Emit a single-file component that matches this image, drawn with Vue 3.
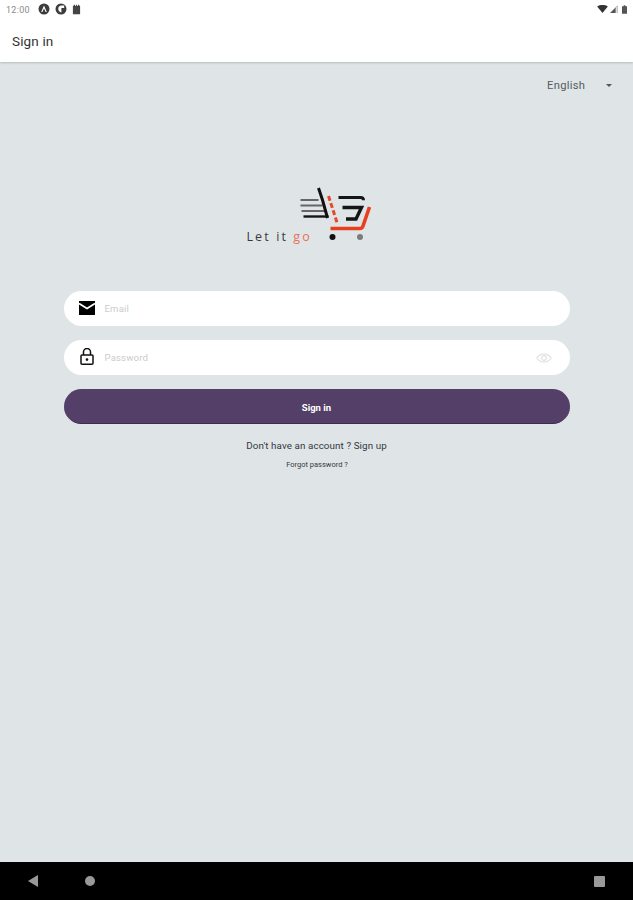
<script setup>
const title = 'Sign in'
</script>

<template>
  <div class="screen">
    <header class="top">
      <div class="status">
        <div class="status-left">
          <span class="time">12:00</span>
          <svg class="ic" viewBox="0 0 12 12"><circle cx="6" cy="6" r="5.5" fill="#3c3c3c"/><path d="M6 2.600 8.800 9H7.600L6 5.400 4.400 9H3.200Z" fill="#fff"/></svg>
          <svg class="ic" viewBox="0 0 12 12"><circle cx="6" cy="6" r="5.500" fill="#3c3c3c"/><path d="M6 2.500h3.200v2.600H6.400v4.300A3.500 3.500 0 0 1 6 2.500Z" fill="#fff"/></svg>
          <svg class="ic card" viewBox="0 0 10 12"><path d="M2.500.8h1v1.400h1V.8h1v1.400h1V.8h1l1.500 1.500v9H1v-9Z" fill="#444"/></svg>
        </div>
        <div class="status-right">
          <svg class="wifi" viewBox="0 0 12 9"><path d="M0 1.600C3.500-.5 8.500-.5 12 1.600L6 9Z" fill="#333"/></svg>
          <svg class="signal" viewBox="0 0 9 9"><path d="M8.500.5V9H0Z" fill="#555"/><path d="M6.300 3 6.300 9H8.500V.5Z" fill="#ddd"/></svg>
          <svg class="batt" viewBox="0 0 6 10"><path d="M2 0h2v1h2v9H0V1h2Z" fill="#555"/></svg>
        </div>
      </div>
      <div class="appbar">{{ title }}</div>
    </header>

    <main class="body">
      <div class="lang">
        <span>English</span>
        <span class="caret"></span>
      </div>

      <svg class="logo" viewBox="246.500 180 140 70" aria-label="Let it go">
        <g fill="none">
          <path d="M300 200h18M300 205.500h22M301 211h24" stroke="#666" stroke-width="2.200"/>
          <path d="M303 216.500h25" stroke="#151515" stroke-width="2.400"/>
          <path d="M318 188 322 200 327 218" stroke="#111" stroke-width="3"/>
          <path d="M338 197.500h22c2 0 3 1 3 2.800" stroke="#151515" stroke-width="3"/>
          <path d="M342 207.500h19l-5.500 11.500h-10" stroke="#151515" stroke-width="3.400"/>
          <path d="M328 196 337 224" stroke="#e8482a" stroke-width="3" stroke-dasharray="5 2.500"/>
          <path d="M369 207 362.500 226c-.5 1.500-1.500 2.500-3 2.500H330" stroke="#e8401f" stroke-width="3.600"/>
        </g>
        <circle cx="332" cy="237" r="3" fill="#111"/>
        <circle cx="359.500" cy="237" r="3" fill="#7b7b7b"/>
        <text class="logo-text" x="246" y="241">Let it <tspan class="logo-go">go</tspan></text>
      </svg>

      <form class="form" @submit.prevent>
        <label class="field">
          <svg class="field-ic" viewBox="0 0 16 14"><path d="M0 0h16v14H0Z" fill="#000"/><path d="M0 2.500 8 7.500l8-5" fill="none" stroke="#fff" stroke-width="1.800"/></svg>
          <span class="placeholder">Email</span>
        </label>
        <label class="field">
          <svg class="field-ic lock" viewBox="0 0 14 17"><path d="M3.500 7V4a3.500 3.500 0 0 1 7 0v3" fill="none" stroke="#111" stroke-width="1.500"/><rect x="1" y="7" width="12" height="9.200" rx="1" fill="#fff" stroke="#111" stroke-width="1.500"/><circle cx="7" cy="11.600" r="1.300" fill="#111"/></svg>
          <span class="placeholder">Password</span>
          <svg class="eye" viewBox="0 0 16 12"><path d="M.8 6C4 .8 12 .8 15.200 6 12 11.200 4 11.200.8 6Z" fill="none" stroke="#dfe3e4" stroke-width="1.200"/><circle cx="8" cy="6" r="2.300" fill="none" stroke="#dfe3e4" stroke-width="1.200"/></svg>
        </label>
        <button class="submit" type="submit">Sign in</button>
      </form>

      <p class="signup">Don't have an account ? Sign up</p>
      <p class="forgot">Forgot password ?</p>
    </main>

    <nav class="nav">
      <svg class="back" viewBox="0 0 10 12"><path d="M10 0v12L0 6Z" fill="#999"/></svg>
      <span class="home"></span>
      <span class="recent"></span>
    </nav>
  </div>
</template>

<style scoped>
.screen {
  width: 633px;
  height: 900px;
  display: flex;
  flex-direction: column;
  font-family: Roboto, "Liberation Sans", sans-serif;
  overflow: hidden;
  background: #dfe5e7;
}
.top {
  height: 62px;
  flex: none;
  background: #fff;
  box-shadow: 0 1px 2px rgba(0, 0, 0, 0.18);
  position: relative;
  display: flex;
  flex-direction: column;
}
.status {
  height: 18px;
  padding: 0 5px;
  display: flex;
  justify-content: space-between;
  align-items: center;
}
.status-left {
  display: flex;
  align-items: center;
  gap: 5px;
}
.status-right {
  display: flex;
  align-items: center;
  gap: 2px;
  padding-right: 1px;
}
.time {
  font-size: 9px;
  color: #8a8a8a;
  letter-spacing: 0.3px;
  margin-right: 3px;
  margin-left: 1px;
  padding-top: 1px;
}
.ic { width: 12px; height: 12px; }
.ic.card { width: 9px; height: 11px; }
.wifi { width: 11px; height: 8px; }
.signal { width: 8px; height: 8px; }
.batt { width: 5px; height: 9px; margin-left: 2px; }
.appbar {
  flex: 1;
  display: flex;
  align-items: center;
  padding: 2px 12px 0;
  font-size: 13.500px;
  letter-spacing: 0.15px;
  color: #333;
}
.body {
  flex: 1;
  display: flex;
  flex-direction: column;
  align-items: center;
  min-height: 0;
}
.lang {
  align-self: flex-end;
  width: 86px;
  height: 15px;
  margin-top: 16px;
  padding-right: 21px;
  box-sizing: border-box;
  display: flex;
  justify-content: space-between;
  align-items: center;
  font-size: 11.200px;
  letter-spacing: 0.3px;
  color: #555c60;
}
.caret {
  width: 0;
  height: 0;
  border-left: 3px solid transparent;
  border-right: 3px solid transparent;
  border-top: 3px solid #555;
}
.logo {
  width: 140px;
  height: 70px;
  margin-top: 87px;
  flex: none;
}
.logo-text {
  font-family: "Open Sans", Roboto, sans-serif;
  font-size: 12.500px;
  letter-spacing: 2.100px;
  fill: #3a3a3a;
}
.logo-go { fill: #e8705a; }
.form {
  width: 506px;
  margin-top: 41px;
  display: flex;
  flex-direction: column;
  gap: 14px;
}
.field {
  height: 35px;
  border-radius: 18px;
  background: #fff;
  display: flex;
  align-items: center;
  padding: 0 18px 0 15px;
  position: relative;
}
.field-ic { width: 16px; height: 14px; flex: none; margin-top: -2px; }
.field-ic.lock { width: 14px; height: 17px; margin-left: 1px; margin-right: 1px; }
.placeholder {
  margin-left: 10px;
  font-size: 9.500px;
  letter-spacing: 0.2px;
  color: #c9cccd;
}
.eye { width: 16px; height: 12px; margin-left: auto; }
.submit {
  height: 35px;
  border: none;
  border-radius: 18px;
  background: #543f68;
  border-bottom: 1px solid #3d2b52;
  color: #fff;
  padding-top: 3px;
  font: 700 9.500px Roboto, sans-serif;
}
.signup {
  margin: 16px 0 0;
  font-size: 9.800px;
  line-height: 12px;
  color: #33383f;
  letter-spacing: 0.1px;
}
.forgot {
  margin: 8px 0 0 1px;
  font-size: 7.500px;
  line-height: 9px;
  color: #33383f;
}
.nav {
  height: 38px;
  flex: none;
  background: #000;
  position: relative;
  display: flex;
  align-items: center;
  padding-left: 28px;
}
.back { width: 10px; height: 12px; }
.home {
  width: 10px;
  height: 10px;
  border-radius: 50%;
  background: #999;
  margin-left: 47px;
}
.recent {
  width: 11px;
  height: 11px;
  border-radius: 1px;
  background: #999;
  margin-left: auto;
  margin-right: 28px;
}
</style>
